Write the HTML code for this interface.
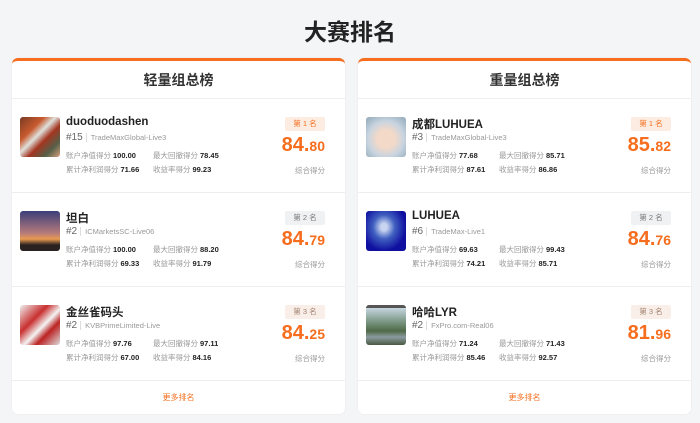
<!DOCTYPE html>
<html><head><meta charset="utf-8"><style>
*{margin:0;padding:0;box-sizing:border-box}
body{width:700px;height:423px;background:#f4f5f7;font-family:"Liberation Sans","Noto Sans CJK SC",sans-serif;position:relative;overflow:hidden;color:#222}
h1{position:absolute;top:15px;left:0;width:700px;text-align:center;font-size:23px;font-weight:bold;color:#222;line-height:34px}
.card{position:absolute;top:58px;width:333px;height:356px;background:#fff;border-radius:6px;border-top:3px solid #f56d1d;box-shadow:0 0 2px rgba(0,0,0,.06)}
.hd{height:38px;line-height:38px;text-align:center;font-size:14px;font-weight:bold;border-bottom:1px solid #eee;color:#333}
.row{position:absolute;left:0;width:100%;height:94px;border-bottom:1px solid #eee}
.av{position:absolute;left:8px;top:18px;width:40px;height:40px;border-radius:3px}
.nm{position:absolute;left:54px;top:17px;font-size:11.5px;font-weight:bold;color:#222}
.id{position:absolute;left:54px;top:33px;font-size:10px;color:#666}
.id span{font-size:7.5px;color:#999;margin-left:3px;padding-left:4px;border-left:1px solid #ddd}
.st{position:absolute;left:54px;font-size:7.5px;color:#999}
.st b{color:#222;font-size:7.5px;margin-left:2px}
.st2{left:141px}
.bd{position:absolute;right:20px;top:18px;width:40px;height:14px;border-radius:2px;font-size:7.5px;line-height:14px;text-align:center}
.sc{position:absolute;right:20px;top:35px;font-size:20px;font-weight:bold;color:#f56d1d}
.sc small{font-size:14px}
.lb{position:absolute;right:20px;top:66px;font-size:7.5px;color:#999}
.more{position:absolute;bottom:0;left:0;width:100%;height:34px;line-height:34px;text-align:center;font-size:8px;color:#f56d1d;border-top:1px solid #eee}
</style></head><body>
<h1>大赛排名</h1>

<div class="card" style="left:12px">
<div class="hd">轻量组总榜</div>
<div class="row" style="top:38px">
<div class="av" style="background:linear-gradient(135deg,#7a3b24,#c75a2e 30%,#dfe0dc 45%,#a33520 60%,#556048 80%,#d8a080)"></div>
<div class="nm">duoduodashen</div>
<div class="id">#15<span>TradeMaxGlobal-Live3</span></div>
<div class="st" style="top:51px">账户净值得分<b>100.00</b></div><div class="st st2" style="top:51px">最大回撤得分<b>78.45</b></div>
<div class="st" style="top:65px">累计净利润得分<b>71.66</b></div><div class="st st2" style="top:65px">收益率得分<b>99.23</b></div>
<div class="bd" style="background:#fdece1;color:#f56d1d">第 1 名</div>
<div class="sc">84.<small>80</small></div><div class="lb">综合得分</div>
</div>
<div class="row" style="top:132px">
<div class="av" style="background:linear-gradient(180deg,#3b3f7a,#b57a7a 55%,#e89a50 70%,#2a2220 85%)"></div>
<div class="nm">坦白</div>
<div class="id">#2<span>ICMarketsSC-Live06</span></div>
<div class="st" style="top:51px">账户净值得分<b>100.00</b></div><div class="st st2" style="top:51px">最大回撤得分<b>88.20</b></div>
<div class="st" style="top:65px">累计净利润得分<b>69.33</b></div><div class="st st2" style="top:65px">收益率得分<b>91.79</b></div>
<div class="bd" style="background:#f0f1f3;color:#777">第 2 名</div>
<div class="sc">84.<small>79</small></div><div class="lb">综合得分</div>
</div>
<div class="row" style="top:226px">
<div class="av" style="background:linear-gradient(135deg,#eee,#c93030 35%,#f3f3f3 55%,#b22 70%,#ddd)"></div>
<div class="nm">金丝雀码头</div>
<div class="id">#2<span>KVBPrimeLimited-Live</span></div>
<div class="st" style="top:51px">账户净值得分<b>97.76</b></div><div class="st st2" style="top:51px">最大回撤得分<b>97.11</b></div>
<div class="st" style="top:65px">累计净利润得分<b>67.00</b></div><div class="st st2" style="top:65px">收益率得分<b>84.16</b></div>
<div class="bd" style="background:#f9efe8;color:#a08070">第 3 名</div>
<div class="sc">84.<small>25</small></div><div class="lb">综合得分</div>
</div>
<div class="more">更多排名</div>
</div>

<div class="card" style="left:358px">
<div class="hd">重量组总榜</div>
<div class="row" style="top:38px">
<div class="av" style="background:radial-gradient(circle at 50% 55%,#f3d9c8 30%,#c8d4e0 60%,#8fa7b8)"></div>
<div class="nm">成都LUHUEA</div>
<div class="id">#3<span>TradeMaxGlobal-Live3</span></div>
<div class="st" style="top:51px">账户净值得分<b>77.68</b></div><div class="st st2" style="top:51px">最大回撤得分<b>85.71</b></div>
<div class="st" style="top:65px">累计净利润得分<b>87.61</b></div><div class="st st2" style="top:65px">收益率得分<b>86.86</b></div>
<div class="bd" style="background:#fdece1;color:#f56d1d">第 1 名</div>
<div class="sc">85.<small>82</small></div><div class="lb">综合得分</div>
</div>
<div class="row" style="top:132px">
<div class="av" style="background:radial-gradient(ellipse at 45% 40%,#c8d4f0 10%,#4060c0 35%,#1010a0 70%)"></div>
<div class="nm">LUHUEA</div>
<div class="id">#6<span>TradeMax-Live1</span></div>
<div class="st" style="top:51px">账户净值得分<b>69.63</b></div><div class="st st2" style="top:51px">最大回撤得分<b>99.43</b></div>
<div class="st" style="top:65px">累计净利润得分<b>74.21</b></div><div class="st st2" style="top:65px">收益率得分<b>85.71</b></div>
<div class="bd" style="background:#f0f1f3;color:#777">第 2 名</div>
<div class="sc">84.<small>76</small></div><div class="lb">综合得分</div>
</div>
<div class="row" style="top:226px">
<div class="av" style="background:linear-gradient(180deg,#555 0,#555 3px,#c6d6e0 3px,#7e9a88 40%,#4f6a48 65%,#8a9aa0 80%,#4a5a40)"></div>
<div class="nm">哈哈LYR</div>
<div class="id">#2<span>FxPro.com-Real06</span></div>
<div class="st" style="top:51px">账户净值得分<b>71.24</b></div><div class="st st2" style="top:51px">最大回撤得分<b>71.43</b></div>
<div class="st" style="top:65px">累计净利润得分<b>85.46</b></div><div class="st st2" style="top:65px">收益率得分<b>92.57</b></div>
<div class="bd" style="background:#f9efe8;color:#a08070">第 3 名</div>
<div class="sc">81.<small>96</small></div><div class="lb">综合得分</div>
</div>
<div class="more">更多排名</div>
</div>
</body></html>
